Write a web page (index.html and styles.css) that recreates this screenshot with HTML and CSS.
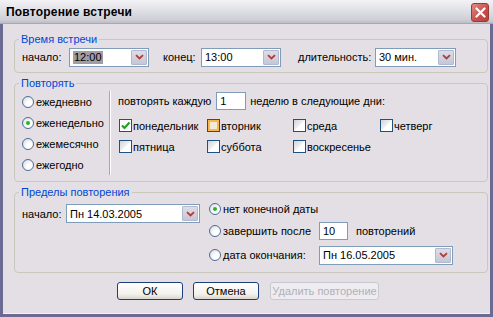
FILE: index.html
```html
<!DOCTYPE html>
<html lang="ru">
<head>
    <meta charset="UTF-8">
    <title>Повторение встречи</title>
    <link rel="stylesheet" href="styles.css">
</head>
<body>
<div class="window">
    <div class="titlebar">
        <span class="title">Повторение встречи</span>
        <span class="close">
            <svg width="11" height="11" viewBox="0 0 11 11"><path d="M1.5 1.5 L9.5 9.5 M9.5 1.5 L1.5 9.5" stroke="#fff" stroke-width="2.2" stroke-linecap="round"/></svg>
        </span>
    </div>
    <div class="content">
        <fieldset class="group g-time">
            <legend>Время встречи</legend>
            <div class="time-row">
                <span class="lbl l-start">начало:</span>
                <div class="combo w80"><span class="val"><span class="sel">12:00</span></span><span class="drop"><svg width="9" height="6" viewBox="0 0 9 6"><path d="M1 1.2 L4.5 4.5 L8 1.2" stroke="#b23a3a" stroke-width="1.8" fill="none"/></svg></span></div>
                <span class="lbl l-end">конец:</span>
                <div class="combo w80"><span class="val">13:00</span><span class="drop"><svg width="9" height="6" viewBox="0 0 9 6"><path d="M1 1.2 L4.5 4.5 L8 1.2" stroke="#b23a3a" stroke-width="1.8" fill="none"/></svg></span></div>
                <span class="lbl l-dur">длительность:</span>
                <div class="combo w81"><span class="val">30 мин.</span><span class="drop"><svg width="9" height="6" viewBox="0 0 9 6"><path d="M1 1.2 L4.5 4.5 L8 1.2" stroke="#b23a3a" stroke-width="1.8" fill="none"/></svg></span></div>
            </div>
        </fieldset>

        <fieldset class="group g-repeat">
            <legend>Повторять</legend>
            <div class="repeat-body">
                <div class="kinds">
                    <div class="opt"><span class="radio"></span>ежедневно</div>
                    <div class="opt"><span class="radio on"></span>еженедельно</div>
                    <div class="opt"><span class="radio"></span>ежемесячно</div>
                    <div class="opt"><span class="radio"></span>ежегодно</div>
                </div>
                <div class="weekly">
                    <div class="every">
                        повторять каждую
                        <span class="field w30">1</span>
                        неделю в следующие дни:
                    </div>
                    <div class="days">
                        <div class="day"><span class="check on"><svg width="11" height="11" viewBox="0 0 11 11"><path d="M2 5.5 L4.5 8 L9.5 2.5" stroke="#21a121" stroke-width="2.2" fill="none"/></svg></span>понедельник</div>
                        <div class="day"><span class="check hover"></span>вторник</div>
                        <div class="day"><span class="check"></span>среда</div>
                        <div class="day"><span class="check"></span>четверг</div>
                        <div class="day"><span class="check"></span>пятница</div>
                        <div class="day"><span class="check"></span>суббота</div>
                        <div class="day"><span class="check"></span>воскресенье</div>
                    </div>
                </div>
            </div>
        </fieldset>

        <fieldset class="group g-range">
            <legend>Пределы повторения</legend>
            <div class="range-body">
                <div class="range-start">
                    <span class="lbl l-from">начало:</span>
                    <div class="combo w134"><span class="val">Пн 14.03.2005</span><span class="drop"><svg width="9" height="6" viewBox="0 0 9 6"><path d="M1 1.2 L4.5 4.5 L8 1.2" stroke="#b23a3a" stroke-width="1.8" fill="none"/></svg></span></div>
                </div>
                <div class="ends">
                    <div class="end-row r1"><span class="radio on"></span>нет конечной даты</div>
                    <div class="end-row r2"><span class="radio"></span><span class="end-lbl">завершить после</span><span class="field w29">10</span><span class="after">повторений</span></div>
                    <div class="end-row r3"><span class="radio"></span><span class="end-lbl">дата окончания:</span><div class="combo w134"><span class="val">Пн 16.05.2005</span><span class="drop"><svg width="9" height="6" viewBox="0 0 9 6"><path d="M1 1.2 L4.5 4.5 L8 1.2" stroke="#b23a3a" stroke-width="1.8" fill="none"/></svg></span></div></div>
                </div>
            </div>
        </fieldset>

        <div class="buttons">
            <button type="button" class="btn b-ok">ОК</button>
            <button type="button" class="btn b-cancel">Отмена</button>
            <button type="button" class="btn b-del" disabled>Удалить повторение</button>
        </div>
    </div>
</div>
</body>
</html>
```

FILE: styles.css
```css
body{
    margin: 0;
    background: #e3dfe4;
    font-family: "Liberation Sans", Arial, sans-serif;
    font-size: 11px;
    color: #000;
}
.window{
    width: 493px;
    height: 317px;
    box-sizing: border-box;
    border: 3px solid #6a6a92;
    border-top: none;
    background: #e3dfe4;
    box-shadow: inset 0 -1px 0 #f4f2f6;
}
.titlebar{
    height: 24px;
    margin: 0 -3px;
    display: flex;
    align-items: center;
    justify-content: space-between;
    padding: 0 4px 0 6px;
    background: linear-gradient(#f3f3f6, #e2e2e8 40%, #cfcfd8 85%, #bdbdc8);
    border-bottom: 1px solid #a8a8b8;
    box-sizing: border-box;
}
.title{
    font-weight: bold;
    font-size: 12px;
    letter-spacing: 0.2px;
}
.close{
    width: 18px;
    height: 19px;
    margin-top: 2px;
    box-sizing: border-box;
    border: 1px solid #9a3a38;
    border-radius: 3px;
    background: linear-gradient(135deg, #e08c86, #c9514c 55%, #b8403b);
    display: flex;
    align-items: center;
    justify-content: center;
}
.content{
    padding: 9px 2px 0 11px;
}

/* группы */
.group{
    margin: 0;
    border: 1px solid #cac8bd;
    border-radius: 4px;
    padding: 0 6px 5px 7px;
    min-width: 0;
}
.group legend{
    color: #0046d5;
    line-height: 13px;
    padding: 0 2px;
    margin-left: -3px;
}
.g-time{
    padding-top: 1px;
}
.g-repeat{
    margin-top: 4px;
    padding-bottom: 3px;
}
.g-range{
    margin-top: 4px;
    padding-bottom: 6px;
}

.lbl{
    display: inline-block;
}
.time-row{
    display: flex;
    align-items: center;
    height: 20px;
}
.l-start{ width: 47px; }
.l-end{ width: 38px; margin-left: 14px; }
.l-dur{ width: 77px; margin-left: 17px; }

/* комбобоксы */
.combo{
    height: 19px;
    box-sizing: border-box;
    border: 1px solid #7f9db9;
    background: #fff;
    display: flex;
    align-items: stretch;
}
.combo .val{
    flex: 1;
    padding-left: 3px;
    display: flex;
    align-items: center;
    white-space: nowrap;
    overflow: hidden;
}
.combo .sel{
    background: #a09ea4;
    padding: 0 1px;
    line-height: 13px;
}
.combo .drop{
    width: 16px;
    margin: 1px;
    border-radius: 1px;
    background: linear-gradient(#dcdde8, #c5c7d6);
    border: 1px solid #b4b8cc;
    box-sizing: border-box;
    display: flex;
    align-items: center;
    justify-content: center;
}
.w80{ width: 80px; }
.w81{ width: 81px; }
.w134{ width: 134px; }

.field{
    display: inline-flex;
    align-items: center;
    height: 18px;
    box-sizing: border-box;
    border: 1px solid #7f9db9;
    background: #fff;
    padding-left: 3px;
}
.w30{ width: 30px; margin: 0 4px 0 5px; }
.w29{ width: 29px; }

/* радио и флажки */
.radio{
    width: 12px;
    height: 12px;
    box-sizing: border-box;
    border: 1px solid #4b6e96;
    border-radius: 50%;
    background: radial-gradient(circle at 70% 70%, #fff 30%, #d6d4dc);
    display: inline-flex;
    align-items: center;
    justify-content: center;
    margin-right: 2px;
    flex: none;
}
.radio.on::after{
    content: "";
    width: 4px;
    height: 4px;
    border-radius: 50%;
    background: #2cb12c;
}
.check{
    width: 13px;
    height: 13px;
    box-sizing: border-box;
    border: 1px solid #1c5180;
    background: linear-gradient(135deg, #d3d1d8 0%, #eeeef0 45%, #fff 55%);
    display: inline-flex;
    align-items: center;
    justify-content: center;
    margin-right: 1px;
    flex: none;
}
.check.on{
    background: #fff;
}
.check.hover{
    box-shadow: inset 0 0 0 2px #f8b64c;
    background: #f3e9d8;
}

.repeat-body{
    display: flex;
    padding-top: 1px;
}
.kinds{
    width: 87px;
    border-right: 1px solid #a8a6ae;
    box-shadow: 1px 0 0 #fff;
    margin-bottom: 3px;
}
.opt{
    height: 21px;
    display: flex;
    align-items: center;
}
.weekly{
    margin-left: 8px;
    flex: 1;
}
.every{
    height: 20px;
    display: flex;
    align-items: center;
}
.days{
    margin-top: 4px;
    display: grid;
    grid-template-columns: 88px 86px 87px auto;
    grid-auto-rows: 21px;
    margin-left: 1px;
}
.day{
    display: flex;
    align-items: center;
}

.range-body{
    display: flex;
}
.range-start{
    display: flex;
    align-items: center;
    margin-top: 5px;
    align-self: flex-start;
}
.l-from{ width: 44px; }
.ends{
    margin-left: 9px;
}
.end-row{
    display: flex;
    align-items: center;
}
.r1{ height: 20px; }
.r2{ height: 22px; margin-top: 1px; }
.r3{ height: 22px; margin-top: 2px; }
.end-lbl{
    width: 96px;
}
.after{
    margin-left: 8px;
}

/* кнопки */
.buttons{
    display: flex;
    justify-content: center;
    margin-top: 9px;
    padding-right: 6px;
}
.btn{
    height: 18px;
    font-family: inherit;
    font-size: 11px;
    color: #000;
    border: 1px solid #1a3f7a;
    border-radius: 3px;
    background: linear-gradient(#fff, #f2f1ec 70%, #d8d5cc);
    padding: 0;
}
.b-ok{ width: 66px; }
.b-cancel{ width: 66px; margin-left: 10px; }
.b-del{
    width: 109px;
    margin-left: 11px;
    color: #b1afb6;
    border-color: #cbc9d0;
    background: #eeecf0;
}
```
